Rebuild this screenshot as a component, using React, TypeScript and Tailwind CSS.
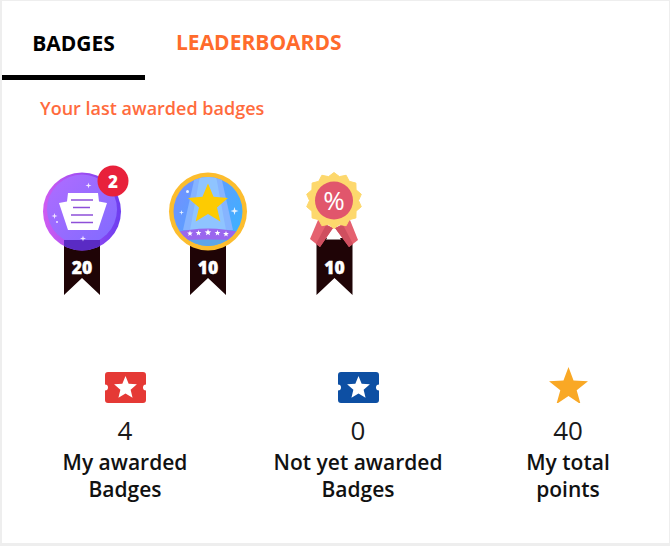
import React from 'react';

const FONT = '"Open Sans", "Noto Sans", sans-serif';

// five pointed star as polygon points
function starPoints(cx: number, cy: number, r: number, inner = 0.42) {
  const pts: string[] = [];
  for (let i = 0; i < 10; i++) {
    const rad = i % 2 === 0 ? r : r * inner;
    const a = (Math.PI / 5) * i - Math.PI / 2;
    pts.push(`${(cx + rad * Math.cos(a)).toFixed(2)},${(cy + rad * Math.sin(a)).toFixed(2)}`);
  }
  return pts.join(' ');
}

function sparkle(cx: number, cy: number, r: number) {
  const s = r * 0.22;
  return `M${cx} ${cy - r}L${cx + s} ${cy - s}L${cx + r} ${cy}L${cx + s} ${cy + s}L${cx} ${cy + r}L${cx - s} ${cy + s}L${cx - r} ${cy}L${cx - s} ${cy - s}Z`;
}

function scallopPath(cx: number, cy: number, r: number, n: number) {
  let d = '';
  for (let i = 0; i <= n * 2; i++) {
    const a = (Math.PI / n) * i - Math.PI / 2;
    const rad = i % 2 === 0 ? r : r - 3.5;
    const x = cx + rad * Math.cos(a);
    const y = cy + rad * Math.sin(a);
    d += i === 0 ? `M${x.toFixed(2)} ${y.toFixed(2)}` : `L${x.toFixed(2)} ${y.toFixed(2)}`;
  }
  return d + 'Z';
}

function Ribbon({ cx, top, value }: { cx: number; top: number; value: number }) {
  return (
    <>
      <path d={`M${cx - 18} ${top}H${cx + 18}V295L${cx} 278L${cx - 18} 295Z`} fill="#1f0406" />
      <text
        x={cx}
        y={274}
        textAnchor="middle"
        fontSize="17.5"
        fontWeight="800"
        fill="#fff"
        stroke="#fff"
        strokeWidth="0.4"
        style={{ fontFamily: FONT }}
      >
        {value}
      </text>
    </>
  );
}

function ChallengeBadge() {
  return (
    <svg width="126" height="135" viewBox="19 165 126 135">
      <defs>
        <linearGradient id="ring" x1="0" y1="0" x2="1" y2="0">
          <stop offset="0" stopColor="#cf5cf2" />
          <stop offset="1" stopColor="#6c3df0" />
        </linearGradient>
        <linearGradient id="disc" x1="0" y1="0" x2="1" y2="1">
          <stop offset="0" stopColor="#b06cff" />
          <stop offset="1" stopColor="#7f6bff" />
        </linearGradient>
        <clipPath id="ringClip">
          <circle cx="82" cy="211.5" r="39" />
        </clipPath>
      </defs>
      <Ribbon cx={82} top={240} value={20} />
      <circle cx="82" cy="211.5" r="39" fill="url(#ring)" />
      <circle cx="82" cy="209.5" r="35" fill="url(#disc)" />
      <rect x="64" y="240" width="36" height="12" fill="#5a2bc4" clipPath="url(#ringClip)" />
      <path d="M68 193H98L99 201.500L107 203L98 230H68L59 203L67 201.500Z" fill="#fff" />
      <g stroke="#8e4fd8" strokeWidth="1.5">
        <line x1="71" y1="200" x2="93" y2="200" />
        <line x1="73" y1="207.500" x2="90" y2="207.500" />
        <line x1="71" y1="215" x2="93" y2="215" />
        <line x1="71" y1="222.500" x2="93" y2="222.500" />
      </g>
      <path d={sparkle(88.5, 185.5, 3)} fill="#f2e6ff" />
      <path d={sparkle(54.5, 216, 3)} fill="#f2e6ff" />
      <circle cx="57" cy="222" r="1" fill="#f2e6ff" />
      <path d={sparkle(83, 238.5, 3)} fill="#f2e6ff" />
      <circle cx="113" cy="181" r="15.5" fill="#e8213b" />
      <text x="113" y="187.5" textAnchor="middle" fontSize="17" fontWeight="800" fill="#fff" style={{ fontFamily: FONT }}>
        2
      </text>
    </svg>
  );
}

function StarBadge() {
  return (
    <svg width="126" height="135" viewBox="145 165 126 135">
      <defs>
        <linearGradient id="sky" x1="0" y1="0" x2="1" y2="0.6">
          <stop offset="0" stopColor="#7a8cff" />
          <stop offset="1" stopColor="#3fb0ff" />
        </linearGradient>
        <clipPath id="inner">
          <circle cx="208" cy="211.5" r="34.5" />
        </clipPath>
      </defs>
      <Ribbon cx={208} top={240} value={10} />
      <circle cx="208" cy="211.5" r="39" fill="#fcbd2e" />
      <g clipPath="url(#inner)">
        <rect x="170" y="175" width="76" height="72" fill="url(#sky)" />
        <path d="M195 176H221L233 230H183Z" fill="#86b4ff" />
        <path d="M200 176H216L226 230H190Z" fill="#8fc4ff" />
        <rect x="170" y="238" width="76" height="10" fill="#5ea5e8" />
        <path d="M170 234Q208 223 246 234V241Q208 238 170 241Z" fill="#9a66ee" />
      </g>
      <polygon points={starPoints(208, 204.5, 21, 0.45)} fill="#fdcb02" />
      <polygon points={starPoints(190, 233.5, 3)} fill="#fff" />
      <polygon points={starPoints(198.5, 233, 3)} fill="#fff" />
      <polygon points={starPoints(208, 232.5, 3.5)} fill="#fff" />
      <polygon points={starPoints(217.5, 233, 3)} fill="#fff" />
      <polygon points={starPoints(226, 234, 3)} fill="#fff" />
      <circle cx="187.5" cy="191.5" r="1.5" fill="#e6f2ff" />
      <path d={sparkle(181.5, 212.5, 2.5)} fill="#e6f2ff" />
      <path d={sparkle(234.5, 211, 4)} fill="#e6f2ff" />
    </svg>
  );
}

function DiscountBadge() {
  return (
    <svg width="126" height="135" viewBox="271 165 126 135">
      <Ribbon cx={334.5} top={238} value={10} />
      <path d="M333.500 229L326 239.500H341Z" fill="#fff" />
      <path d="M318 220L333 228L320 247L310 239Z" fill="#e5616f" />
      <path d="M350 220L335 228L349 247L358 240Z" fill="#e5616f" />
      <path d="M326 225L333 228L320 247L316 244Z" fill="#cf4f5f" />
      <path d="M343 225L335 228L349 247L353 244Z" fill="#cf4f5f" />
      <path d={scallopPath(334, 200.5, 28, 14)} fill="#fdd86d" stroke="#fdd86d" strokeWidth="1" strokeLinejoin="round" />
      <circle cx="334" cy="200.5" r="19" fill="#e1566c" />
      <text x="334" y="210" textAnchor="middle" fontSize="26" fontWeight="400" fill="#fff" style={{ fontFamily: FONT }}>
        %
      </text>
    </svg>
  );
}

function TicketIcon({ color }: { color: string }) {
  return (
    <svg width="41" height="31" viewBox="0 0 41 31">
      <path
        d="M3 0H38A3 3 0 0 1 41 3V12.500A3 3 0 0 0 41 18.500V28A3 3 0 0 1 38 31H3A3 3 0 0 1 0 28V18.500A3 3 0 0 0 0 12.500V3A3 3 0 0 1 3 0Z"
        fill={color}
      />
      <polygon points={starPoints(20.5, 16, 12, 0.45)} fill="#fff" />
    </svg>
  );
}

function StarIcon() {
  return (
    <svg width="41" height="36" viewBox="0 0 41 36">
      <polygon points={starPoints(20.5, 20.5, 20.5, 0.42)} fill="#f9a825" />
    </svg>
  );
}

function Stat({ icon, value, label, width }: { icon: React.ReactNode; value: number; label: React.ReactNode; width: string }) {
  return (
    <div className={`flex flex-col items-center ${width}`}>
      <div className="flex h-[36px] items-end">{icon}</div>
      <div className="mt-[11px] text-[26px] leading-[33px] text-[#1a1a1a]">{value}</div>
      <div className="mt-[2px] text-center text-[21px] font-[550] leading-[27px] text-[#111]">{label}</div>
    </div>
  );
}

export default function App() {
  return (
    <div className="h-[546px] w-[670px] overflow-hidden bg-[#eeeeee] pt-px pb-[3px] pl-[2px] pr-px" style={{ fontFamily: FONT }}>
      <div className="h-full bg-white">
        <div className="flex h-[79px]">
          <div className="flex w-[143px] items-center justify-center border-b-[5px] border-black pt-[12px] text-[21px] font-bold text-black">
            BADGES
          </div>
          <div className="ml-[31px] flex items-center pt-[5px] text-[21px] font-bold text-[#ff6b2c]">LEADERBOARDS</div>
        </div>
        <div className="mt-[15px] pl-[38px] text-[18px] font-[550] leading-[27px] text-[#ff6b3d]">Your last awarded badges</div>
        <div className="mt-[43px] flex pl-[17px]">
          <ChallengeBadge />
          <StarBadge />
          <DiscountBadge />
        </div>
        <div className="mt-[67px] flex pl-[8px]">
          <Stat width="w-[230px]" icon={<TicketIcon color="#e53935" />} value={4} label={<>My awarded<br />Badges</>} />
          <Stat width="w-[236px]" icon={<TicketIcon color="#0d4fa3" />} value={0} label={<>Not yet awarded<br />Badges</>} />
          <Stat width="w-[184px]" icon={<StarIcon />} value={40} label={<>My total<br />points</>} />
        </div>
      </div>
    </div>
  );
}
